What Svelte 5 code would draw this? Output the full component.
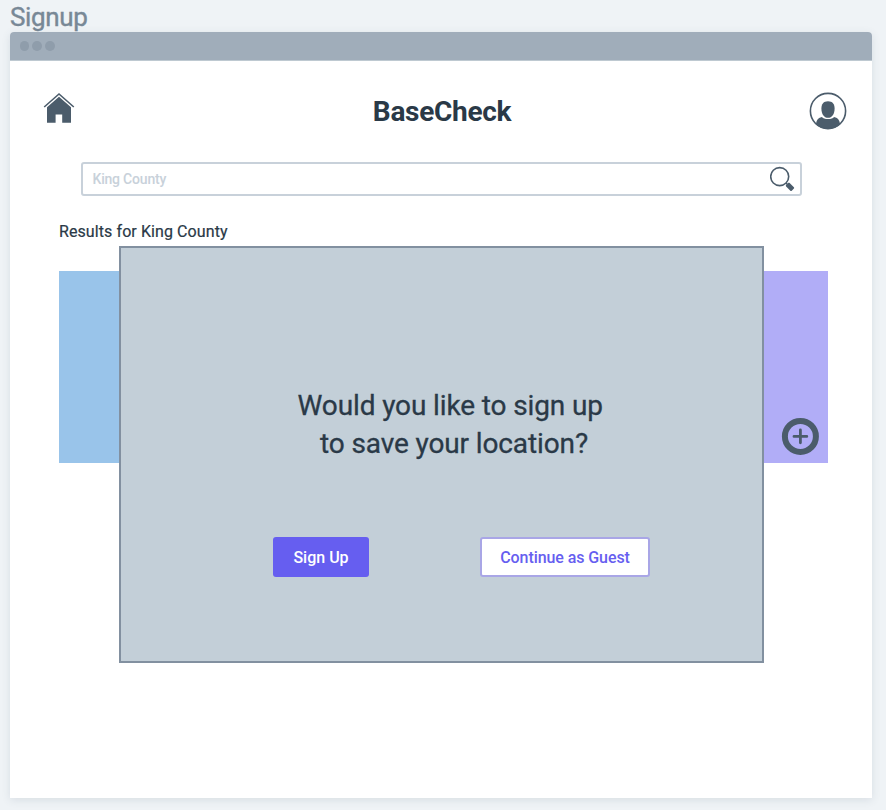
<script>
  let location = $state('King County');
</script>

<main class="board">
  <div class="label"><span>Signup</span></div>
  <section class="window">
    <div class="bar"><i></i><i></i><i></i></div>

    <header>
      <svg class="home" width="32" height="32" viewBox="0 0 32 32" aria-label="Home">
        <path d="M1.2 15 16 2 30.8 15" fill="none" stroke="#4b5c6b" stroke-width="1.6" />
        <path d="M16 4.8 28 15.2V30.8H19.2V22.6H12.6V30.8H4V15.2Z" fill="#4b5c6b" />
      </svg>
      <h1>BaseCheck</h1>
      <svg class="user" width="38" height="38" viewBox="0 0 38 38" aria-label="Account">
        <defs><clipPath id="disc"><circle cx="19" cy="19" r="18" /></clipPath></defs>
        <path clip-path="url(#disc)" d="M7 38V31.5C7.6 27.5 9.5 25.6 13 25Q14.5 27 19 27T25 25C28.5 25.6 30.4 27.5 31 31.5V38Z" fill="#4b5c6b" />
        <path d="M19 9.2C23.5 9.2 25.6 12 25.6 16.4C25.6 22 23 25.7 19 25.7S12.4 22 12.4 16.4C12.4 12 14.5 9.2 19 9.2Z" fill="#4b5c6b" />
        <circle cx="19" cy="19" r="17.6" fill="none" stroke="#4b5c6b" stroke-width="1.6" />
      </svg>
    </header>

    <div class="search">
      <span>{location}</span>
      <svg width="26" height="26" viewBox="0 0 26 26" aria-label="Search">
        <circle cx="9.7" cy="10.6" r="9" fill="none" stroke="#4b5c6b" stroke-width="1.6" />
        <path d="m16 17 1.4 1.4" stroke="#4b5c6b" stroke-width="1.5" />
        <rect x="-4" y="-2.5" width="8" height="5" rx="1" transform="translate(20 20.8) rotate(45)" fill="#4b5c6b" />
      </svg>
    </div>

    <p class="results"><span>Results for {location}</span></p>

    <div class="cards">
      <div class="card blue"></div>
      <div class="card violet">
        <svg width="38" height="38" viewBox="0 0 38 38" aria-label="Add">
          <circle cx="19.4" cy="19.4" r="15.5" fill="none" stroke="#4b5c6b" stroke-width="6" />
          <path d="M19.4 13V25.8M13 19.4H25.8" stroke="#4b5c6b" stroke-width="2.8" stroke-linecap="round" />
        </svg>
      </div>
    </div>

    <div class="modal" role="dialog">
      <h2><span class="q1">Would you like to sign up</span><span class="q2">to save your location?</span></h2>
      <div class="actions">
        <button class="primary"><span>Sign Up</span></button>
        <button class="secondary"><span>Continue as Guest</span></button>
      </div>
    </div>
  </section>
</main>

<style>
  :global(body) { margin: 0; background: #eff3f6; }
  * { box-sizing: border-box; }
  .board {
    width: 886px; height: 810px; overflow: hidden; padding: 0 14px 0 10px;
    background: #eff3f6; color: #2a3947;
    font-family: Roboto, "Liberation Sans", sans-serif; white-space: nowrap;
  }
  .label {
    height: 32px; line-height: 35px; font-size: 26px; font-weight: 400;
    color: #788896; -webkit-text-stroke: 0.4px #788896; letter-spacing: -0.35px;
  }
  .window {
    position: relative; height: 766px; background: #fff;
    border-radius: 4px 4px 0 0; box-shadow: 0 2px 8px rgba(60, 85, 105, 0.13);
  }
  .bar {
    height: 29px; display: flex; align-items: center; gap: 3px; padding-left: 9.5px;
    background: #a0adba; border-radius: 4px 4px 0 0; border-bottom: 1px solid #bec9d1;
  }
  .bar i { width: 9.8px; height: 9.8px; border-radius: 50%; background: #8f9dab; }
  header {
    height: 101px; display: flex; justify-content: space-between; align-items: flex-start;
    padding: 31px 25px 0 33px;
  }
  .user { display: block; }
  h1 {
    margin: 0; font-size: 28px; line-height: 39px;
    font-weight: 700; letter-spacing: -0.3px;
  }
  .search {
    display: flex; align-items: center; justify-content: space-between;
    width: 721px; height: 34px; margin-left: 71px; padding: 0 4px 0 9.5px;
    border: 2px solid #c8d1da; border-radius: 3px;
    font-size: 14px; font-weight: 500; color: #c8d1da; letter-spacing: -0.2px;
  }
  .results {
    margin: 0; padding: 25px 0 0 49px; height: 75px; font-size: 16px; line-height: 22px;
    font-weight: 400; letter-spacing: 0.09px; -webkit-text-stroke: 0.2px #2a3947;
  }
  .cards { display: flex; justify-content: space-between; height: 192px; margin: 0 44px 0 49px; }
  .card { width: 192px; }
  .blue { background: #99c4ea; }
  .violet {
    display: flex; align-items: flex-end; justify-content: flex-end;
    padding: 0 9px 8px 0; background: #b1adf7;
  }
  .modal {
    position: absolute; left: 109px; top: 214px; width: 645px; height: 417px;
    border: 2px solid #8290a0; background: #c3cfd8;
  }
  h2 {
    margin: 0; padding: 139px 0 0 176.5px; height: 289px; font-size: 28px; line-height: 38px;
    font-weight: 400; letter-spacing: -0.12px; -webkit-text-stroke: 0.3px #2a3947;
    display: flex; flex-direction: column; align-items: flex-start;
  }
  .q2 { margin-left: 22.5px; }
  .actions { display: flex; justify-content: space-between; padding: 0 112px 0 152px; }
  button {
    display: flex; align-items: center; justify-content: center; height: 40px; padding: 0;
    border: 0; border-radius: 3px; font-family: inherit; font-size: 16px; font-weight: 500;
  }
  .primary { width: 96px; background: #665ef0; color: #fff; }
  .secondary {
    width: 170px; border: 2px solid #a9a6e6; background: #fff; color: #665ef0;
    letter-spacing: -0.08px;
  }
</style>
